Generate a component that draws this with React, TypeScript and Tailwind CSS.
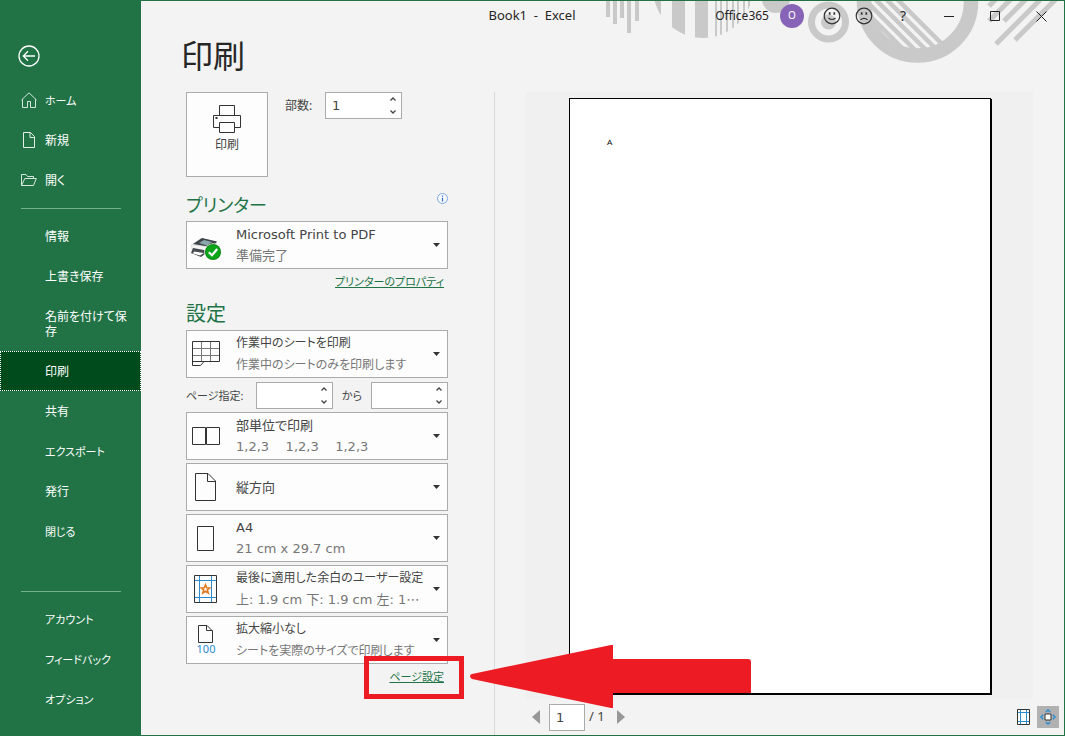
// Print screen of the backstage view

import React, { useState } from 'react';

const uiFont =
  "font-['Noto_Sans','Noto_Sans_CJK_JP',sans-serif] [font-feature-settings:'palt']";
const fieldFont =
  "font-['DejaVu_Sans','Noto_Sans_CJK_JP',sans-serif] [font-feature-settings:'palt']";

/* ---------- icons ---------- */

const BackIcon = () => (
  <svg width="22" height="22" viewBox="0 0 22 22" fill="none" stroke="#fff" strokeWidth="1.3">
    <circle cx="11" cy="11" r="10" />
    <path d="M5.5 11H17M10 6.3L5.3 11L10 15.7" />
  </svg>
);

const HomeIcon = () => (
  <svg width="16" height="16" viewBox="0 0 16 16" fill="none" stroke="#d5e6dc">
    <path d="M.5 8L8 .8L15.500 8M1.500 7.200V15.500H6.500V9.500H9.500V15.500H14.500V7.200" />
  </svg>
);

const NewIcon = () => (
  <svg width="16" height="16" viewBox="0 0 16 16" fill="none" stroke="#e4efe8">
    <path d="M2.500 .5H9.500L13.500 4.500V15.500H2.500ZM9 .5V5.500H13.500" />
  </svg>
);

const OpenIcon = () => (
  <svg width="16" height="16" viewBox="0 0 16 16" fill="none" stroke="#d5e6dc">
    <path d="M.5 13.500V2.500H5L6.500 4.500H12.500V6.500M.5 13.500H12.500L15.300 6.500H3.800Z" />
  </svg>
);

const PrintIcon = () => (
  <svg width="28" height="28" viewBox="0 0 28 28" fill="#fdfdfd" stroke="#333">
    <path d="M6.500 10.500V.5H21.500V10.500" />
    <path d="M.5 10.500H27.500V22.500H.5Z" />
    <path d="M6.500 17.500H21.500V27.500H6.500Z" />
    <rect x="3" y="12.500" width="1" height="1" />
  </svg>
);

const InfoIcon = () => (
  <svg width="11" height="11" viewBox="0 0 11 11" fill="none">
    <circle cx="5.500" cy="5.500" r="5" fill="#f7faff" stroke="#7da7e0" />
    <path d="M5.500 2.500V3.700M5.500 4.700V8.500" stroke="#2b6cc4" strokeWidth="1.200" />
  </svg>
);

const PrinterReadyIcon = () => (
  <svg width="32" height="34" viewBox="0 -8 32 34">
    <path d="M1 9L11 2L27 6L24 17L7 19L2 16Z" fill="#d9dbdc" />
    <path d="M3 8L12 2L27 5.500L22 11Z" fill="#3d4347" />
    <path d="M9 7L14 4L22 6L17 9.500Z" fill="#8ba9ac" />
    <path d="M2 9L20 12V15L2 11.500Z" fill="#f5f5f5" />
    <path d="M3 12L19 15L11 21L1 17Z" fill="#454a4d" />
    <path d="M4 15.500L14 17L10 19.500L3 17.500Z" fill="#fff" />
    <circle cx="23" cy="16" r="8.700" fill="#fff" />
    <circle cx="23" cy="16" r="8" fill="#078a10" />
    <circle cx="23" cy="16" r="7" fill="#0fa51a" />
    <path d="M18.800 16.200L22 19.200L27.200 13" fill="none" stroke="#fff" strokeWidth="2.200" />
  </svg>
);

const SheetIcon = () => (
  <svg width="28" height="26" viewBox="0 0 28 26" fill="none" stroke="#333">
    <path d="M9.500 .5V20M18.500 .5V20M.5 7.500H27.500M.5 14.500H27.500" stroke="#777" />
    <path d="M.5 .5H27.500V20.500H12L8.500 24.500H.5ZM.5 20.500H12" />
  </svg>
);

const CollateIcon = () => (
  <svg width="28" height="19" viewBox="0 0 28 19" fill="none" stroke="#333">
    <path d="M.5 .5H13.500V17.500H.5ZM14.500 .5H27.500V17.500H14.500Z" />
  </svg>
);

const PortraitIcon = () => (
  <svg width="22" height="28" viewBox="0 0 22 28" fill="none" stroke="#333">
    <path d="M.5 .5H13L20.500 8V27.500H.5ZM12.500 .5V8.500H20.500" />
  </svg>
);

const PaperIcon = () => (
  <svg width="18" height="25" viewBox="0 0 18 25" fill="none" stroke="#333">
    <path d="M.5 .5H16.500V24.500H.5Z" />
  </svg>
);

const MarginIcon = () => (
  <svg width="24" height="28" viewBox="0 0 24 28" fill="none">
    <path d="M5.500 0V28M17.500 0V28M0 5.500H23M0 22.500H23" stroke="#2b8ccf" />
    <path d="M.5 .5H22.500V27.500H.5Z" stroke="#333" />
    <path
      d="M11.500 9.800L12.700 12.700L15.800 12.900L13.400 14.900L14.200 18L11.500 16.300L8.800 18L9.600 14.900L7.200 12.900L10.300 12.700Z"
      stroke="#e07b1f"
      strokeWidth="1.600"
    />
  </svg>
);

const ScaleIcon = () => (
  <span className="flex flex-col items-center">
    <svg width="15" height="18" viewBox="0 0 15 18" fill="none" stroke="#333">
      <path d="M.5 .5H9L14.500 6V17.500H.5ZM8.500 .5V5.500H14.500" />
    </svg>
    <span className="font-['Noto_Sans',sans-serif] text-[11px] leading-[12px] text-[#2b8ccf]">
      100
    </span>
  </span>
);

const FaceIcon: React.FC<{ mouth: string }> = ({ mouth }) => (
  <svg width="18" height="18" viewBox="0 0 18 18" fill="none" stroke="#333" strokeWidth="1.200">
    <circle cx="9" cy="9" r="7.800" />
    <path d="M6.700 5.300V7.800M11.300 5.300V7.800" strokeWidth="1.700" />
    <path d={mouth} />
  </svg>
);

const Ornament = () => (
  <svg
    className="pointer-events-none absolute top-0 right-0"
    width="464"
    height="64"
    viewBox="600 1 464 64"
    fill="#c9c9c9"
  >
    <defs>
      <clipPath id="disc">
        <circle cx="703" cy="-12" r="50" />
      </clipPath>
      <clipPath id="hole">
        <circle cx="917.500" cy="2" r="47" />
      </clipPath>
    </defs>
    <path d="M606 0h4v17h-4zM613 0h4v24h-4zM620 0h4v18h-4zM627 0h4v33h-4zM635 0h4v21h-4z" />
    <path
      clipPath="url(#disc)"
      d="M648 0h13v40h-13zM672 0h13v40h-13zM695 0h13v40h-13zM715 0h2v40h-2zM720 0h2v40h-2zM726 0h2v40h-2zM732 0h2v40h-2zM737 0h2v40h-2zM743 0h2v40h-2zM748 0h2v40h-2z"
    />
    <circle cx="776" cy="-1" r="14" />
    <circle cx="828.500" cy="22" r="7.500" />
    <circle cx="828.500" cy="22" r="17" fill="none" stroke="#c9c9c9" strokeWidth="7" />
    <circle cx="917.500" cy="2" r="53.500" fill="none" stroke="#c9c9c9" strokeWidth="14.500" />
    <g clipPath="url(#hole)" stroke="#c9c9c9" strokeWidth="4.500">
      <path d="M897 -1L957 59M886 -1L946 59M875 -1L935 59M864 -1L924 59M853 -1L913 59" />
    </g>
    <path
      d="M996 44L1040 0M1015 40L1056 -1M1004 21L1026 -1M989 21L1011 -1M989 6L996 -1"
      stroke="#c9c9c9"
      strokeWidth="5"
    />
  </svg>
);

/* ---------- controls ---------- */

const NavItem: React.FC<{
  label: string;
  icon?: React.ReactNode;
  active?: boolean;
  tall?: boolean;
  kana?: boolean;
}> = ({ label, icon, active, tall, kana }) => (
  <button
    className={`flex w-full items-center text-left leading-[15px] break-all text-white ${
      kana ? 'text-[11px]' : 'text-xs'
    } ${tall ? 'h-[55px]' : 'h-10'} ${
      active ? 'border border-dotted border-white bg-[#004b1c] pl-5' : 'pl-[21px]'
    } pr-3`}
  >
    <span className="w-6 shrink-0">{icon}</span>
    {label}
  </button>
);

const Spinner: React.FC<{ id: string; value?: string }> = ({ id, value = '' }) => {
  const [text, setText] = useState(value);
  const step = (n: number) => setText(String(Math.max(1, (Number(text) || 0) + n)));

  return (
    <span className="flex h-[27px] w-[77px] border border-[#ababab] bg-white">
      <input
        id={id}
        value={text}
        onChange={e => setText(e.target.value)}
        className={`min-w-0 flex-1 pl-1.5 text-[13px] text-[#444] outline-none ${fieldFont}`}
      />
      <span className="flex w-4 flex-col">
        <button aria-label="増やす" onClick={() => step(1)} className="flex flex-1 items-center justify-center">
          <svg width="6" height="4" viewBox="0 0 6 4" fill="none" stroke="#444" strokeWidth="1.300">
            <path d="M.5 3.500L3 1L5.500 3.500" />
          </svg>
        </button>
        <button aria-label="減らす" onClick={() => step(-1)} className="flex flex-1 items-center justify-center">
          <svg width="6" height="4" viewBox="0 0 6 4" fill="none" stroke="#444" strokeWidth="1.300">
            <path d="M.5 .5L3 3L5.500 .5" />
          </svg>
        </button>
      </span>
    </span>
  );
};

const Picker: React.FC<{
  name: string;
  icon: React.ReactNode;
  title: string;
  note?: string;
  smallTitle?: boolean;
  smallNote?: boolean;
}> = ({ name, icon, title, note, smallTitle, smallNote }) => (
  <div className="flex h-12 items-center border border-[#ababab] bg-[#fdfdfd]">
    <span className="flex w-[38px] shrink-0 justify-center">{icon}</span>
    <div className={`min-w-0 flex-1 pl-[11px] ${fieldFont}`}>
      <select
        aria-label={name}
        className={`block h-[21px] w-full appearance-none leading-[21px] text-[#444] outline-none ${
          smallTitle ? 'text-xs' : 'text-[13px]'
        }`}
      >
        <option>{title}</option>
      </select>
      {note && (
        <p className={`leading-[22px] whitespace-pre text-[#767676] ${smallNote ? 'text-xs' : 'text-[13px]'}`}>
          {note}
        </p>
      )}
    </div>
    <svg className="mr-[7px] ml-1 shrink-0" width="7" height="4" viewBox="0 0 7 4" fill="#333">
      <path d="M0 0H7L3.500 4Z" />
    </svg>
  </div>
);

/* ---------- page parts ---------- */

const Sidebar = () => (
  <nav className="w-[141px] shrink-0 bg-[#217346] pt-9">
    <button aria-label="戻る" className="flex h-11 w-full items-start pt-[9px] pl-[18px]">
      <BackIcon />
    </button>
    <NavItem label="ホーム" icon={<HomeIcon />} kana />
    <NavItem label="新規" icon={<NewIcon />} />
    <NavItem label="開く" icon={<OpenIcon />} />
    <hr className="mt-2 mr-5 mb-[7px] ml-[21px] border-[#6fb089]" />
    <NavItem label="情報" />
    <NavItem label="上書き保存" />
    <NavItem label="名前を付けて保存" tall />
    <NavItem label="印刷" active />
    <NavItem label="共有" />
    <NavItem label="エクスポート" kana />
    <NavItem label="発行" />
    <NavItem label="閉じる" kana />
    <hr className="mt-10 mr-5 mb-[7px] ml-[21px] border-[#6fb089]" />
    <NavItem label="アカウント" kana />
    <NavItem label="フィードバック" kana />
    <NavItem label="オプション" kana />
  </nav>
);

const TitleBar = () => (
  <header className="relative -ml-[141px] grid h-[30px] grid-cols-[1fr_auto_1fr] items-center text-xs text-[#262626]">
    <span />
    <span className="text-[13px] whitespace-pre">{'Book1  -  Excel'}</span>
    <div className="flex h-full items-center justify-end">
      <span className="mr-[11px]">Office365</span>
      <button className="mr-3 h-6 w-6 rounded-full bg-[#8764b8] text-[10px] text-white">O</button>
      <button aria-label="笑顔" className="flex w-8 justify-center">
        <FaceIcon mouth="M5.500 11Q9 14 12.500 11" />
      </button>
      <button aria-label="不満" className="flex w-8 justify-center">
        <FaceIcon mouth="M5.500 12.800Q9 9.800 12.500 12.800" />
      </button>
      <button className="w-[46px] text-center text-sm">?</button>
      <button aria-label="最小化" className="flex w-[46px] justify-center">
        <svg width="11" height="11" viewBox="0 0 11 11" stroke="#222">
          <path d="M0 5.500H10" />
        </svg>
      </button>
      <button aria-label="最大化" className="flex w-[46px] justify-center">
        <svg width="11" height="11" viewBox="0 0 11 11" fill="none" stroke="#222">
          <path d="M.5 .5H9.500V9.500H.5Z" />
        </svg>
      </button>
      <button aria-label="閉じる" className="flex w-[46px] justify-center">
        <svg width="11" height="11" viewBox="0 0 11 11" stroke="#222">
          <path d="M.5 .5L10.500 10.500M10.500 .5L.5 10.500" />
        </svg>
      </button>
    </div>
  </header>
);

const Settings = () => (
  <section className="w-[262px] shrink-0 text-[#444]">
    <div className="mb-3 flex">
      <button className="flex h-[85px] w-[82px] flex-col items-center border border-[#ababab] bg-[#fdfdfd] pt-3 text-xs">
        <PrintIcon />
        <span className="mt-1">印刷</span>
      </button>
      <label htmlFor="copies" className="ml-[17px] w-10 text-xs leading-[27px]">
        部数:
      </label>
      <Spinner id="copies" value="1" />
    </div>

    <div className="flex h-8 items-start justify-between">
      <h2 className="text-lg leading-8 text-[#217346]">プリンター</h2>
      <button aria-label="プリンターの情報" className="pt-1">
        <InfoIcon />
      </button>
    </div>
    <Picker name="プリンター" icon={<PrinterReadyIcon />} title="Microsoft Print to PDF" note="準備完了" />
    <div className="h-[29px] pr-1 text-right text-[11px] leading-[26px]">
      <a href="#printer" className="text-[#217346] underline">
        プリンターのプロパティ
      </a>
    </div>

    <h2 className="h-8 text-xl leading-8 text-[#217346]">設定</h2>
    <div className="flex flex-col gap-[3px]">
      <Picker
        name="印刷対象"
        icon={<SheetIcon />}
        title="作業中のシートを印刷"
        note="作業中のシートのみを印刷します"
        smallTitle
        smallNote
      />
      <div className="flex h-7 items-end text-[11px]">
        <label htmlFor="from" className="w-[70px] leading-[27px]">
          ページ指定:
        </label>
        <Spinner id="from" />
        <label htmlFor="to" className="flex-1 text-center leading-[27px]">
          から
        </label>
        <Spinner id="to" />
      </div>
      <Picker name="印刷単位" icon={<CollateIcon />} title="部単位で印刷" note="1,2,3    1,2,3    1,2,3" />
      <Picker name="向き" icon={<PortraitIcon />} title="縦方向" />
      <Picker name="用紙" icon={<PaperIcon />} title="A4" note="21 cm x 29.7 cm" />
      <Picker
        name="余白"
        icon={<MarginIcon />}
        title="最後に適用した余白のユーザー設定"
        note="上: 1.9 cm 下: 1.9 cm 左: 1⋯"
        smallTitle
      />
      <Picker
        name="拡大縮小"
        icon={<ScaleIcon />}
        title="拡大縮小なし"
        note="シートを実際のサイズで印刷します"
        smallTitle
        smallNote
      />
    </div>
    <div className="relative pr-1 text-right text-[11px] leading-[26px]">
      <a href="#page-setup" className="text-[#217346] underline">
        ページ設定
      </a>
      {/* callout around the link */}
      <span className="pointer-events-none absolute -top-2 -right-4 h-[43px] w-[100px] border-5 border-[#ed1c24]" />
      <svg
        className="pointer-events-none absolute -top-5 left-[284px] z-10"
        width="282"
        height="64"
        viewBox="0 0 282 64"
        fill="#ed1c24"
      >
        <path d="M0 32Q0 30.500 2 30L141 1H143V15H278Q281 15 281 18V49H143V64H141L2 35Q0 34 0 32Z" />
      </svg>
    </div>
  </section>
);

const Preview = () => (
  <section className="ml-[46px] flex min-w-0 flex-1 flex-col border-l border-[#d9d9d9] pl-[31px]">
    <div className="mr-[31px] flex flex-1 bg-[#f0f0f0] pt-1.5 pr-[42px] pb-[5px] pl-[43px]">
      <div className="flex-1 border border-black bg-white pt-[39px] pl-[37px] font-['Liberation_Sans',sans-serif] text-[8px] leading-[10px] text-black shadow-[1px_1px_0_#000]">
        A
      </div>
    </div>
    <footer className="flex h-9 items-center pr-[5px] pl-1.5 text-[13px] text-[#444]">
      <button aria-label="前のページ">
        <svg width="8" height="14" viewBox="0 0 8 14" fill="#979797">
          <path d="M8 0V14L0 7Z" />
        </svg>
      </button>
      <input
        aria-label="ページ"
        defaultValue="1"
        className={`mr-1 ml-[9px] h-[27px] w-9 border border-[#ababab] bg-white pl-1.5 text-[13px] outline-none ${fieldFont}`}
      />
      <span>/ 1</span>
      <button aria-label="次のページ" className="ml-3">
        <svg width="8" height="14" viewBox="0 0 8 14" fill="#979797">
          <path d="M0 0V14L8 7Z" />
        </svg>
      </button>
      <button aria-label="余白の表示" className="mr-[7px] ml-auto">
        <svg width="13" height="16" viewBox="0 0 13 16" fill="none">
          <path d="M.5 .5H12.500V15.500H.5Z" fill="#fff" stroke="#333" />
          <path d="M3.500 1V15M9.500 1V15M1 3.500H12M1 12.500H12" stroke="#2b8ccf" />
        </svg>
      </button>
      <button aria-label="ページに合わせる" className="flex h-[22px] w-[22px] items-center justify-center bg-[#b1b1b1]">
        <svg width="16" height="16" viewBox="0 0 16 16" fill="none">
          <path d="M5 5H11V11H5Z" fill="#fff" stroke="#333" />
          <path
            d="M5.800 3L8 1L10.200 3M5.800 13L8 15L10.200 13M3 5.800L1 8L3 10.200M13 5.800L15 8L13 10.200"
            stroke="#2b8ccf"
            strokeWidth="1.500"
          />
        </svg>
      </button>
    </footer>
  </section>
);

export default function App() {
  return (
    <div lang="ja" className={`flex min-h-screen bg-[#f3f3f3] ${uiFont}`}>
      <Sidebar />
      <main className="relative flex min-w-0 flex-1 flex-col border-y border-r border-[#217346]">
        <Ornament />
        <TitleBar />
        <h1 className="mb-3 h-[49px] pl-10 text-[32px] leading-[49px] text-[#262626]">印刷</h1>
        <div className="flex flex-1 pl-[45px]">
          <Settings />
          <Preview />
        </div>
      </main>
    </div>
  );
}
